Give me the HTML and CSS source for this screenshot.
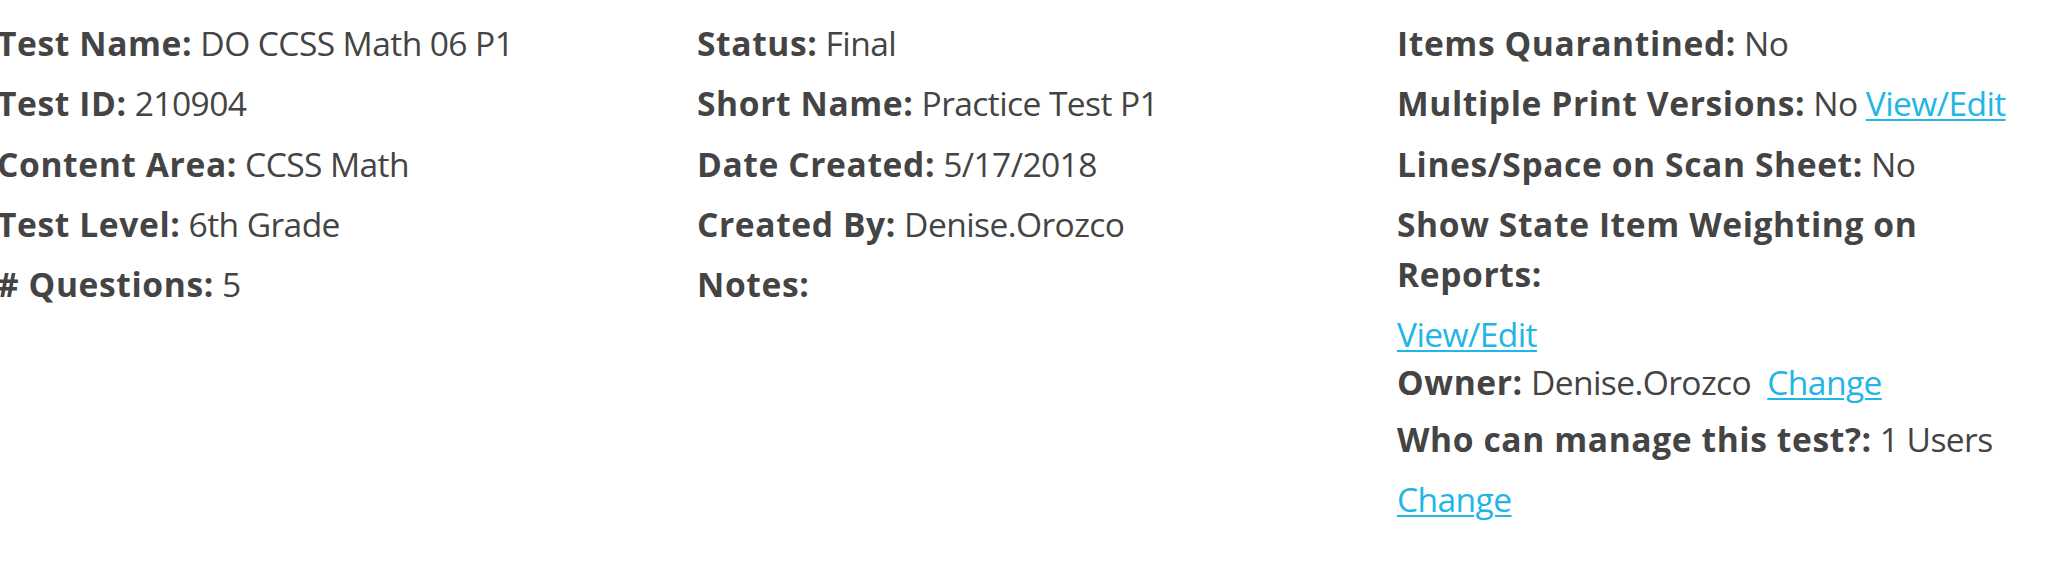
FILE: index.html
```html
<!DOCTYPE html>
<html lang="en">
<head>
<meta charset="utf-8">
<title>Test Details</title>
<link rel="stylesheet" href="styles.css">
</head>
<body>
<div class="details">
  <div class="col">
    <p class="row"><b class="label">Test Name:</b> DO CCSS Math 06 P1</p>
    <p class="row"><b class="label">Test ID:</b> 210904</p>
    <p class="row"><b class="label">Content Area:</b> CCSS Math</p>
    <p class="row"><b class="label">Test Level:</b> 6th Grade</p>
    <p class="row"><b class="label"># Questions:</b> 5</p>
  </div>
  <div class="col">
    <p class="row"><b class="label">Status:</b> Final</p>
    <p class="row"><b class="label">Short Name:</b> Practice Test P1</p>
    <p class="row"><b class="label">Date Created:</b> 5/17/2018</p>
    <p class="row"><b class="label">Created By:</b> Denise.Orozco</p>
    <p class="row"><b class="label">Notes:</b></p>
  </div>
  <div class="col">
    <p class="row"><b class="label">Items Quarantined:</b> No</p>
    <p class="row"><b class="label">Multiple Print Versions:</b> No <a class="link" href="#">View/Edit</a></p>
    <p class="row"><b class="label">Lines/Space on Scan Sheet:</b> No</p>
    <p class="row"><b class="label">Show State Item Weighting on Reports:</b></p>
    <p class="row row-tight"><a class="link" href="#">View/Edit</a><br><b class="label">Owner:</b> Denise.Orozco <a class="link link-gap" href="#">Change</a></p>
    <p class="row"><b class="label">Who can manage this test?:</b> 1 Users</p>
    <p class="row"><a class="link" href="#">Change</a></p>
  </div>
</div>
</body>
</html>
```
FILE: styles.css
```css
html, body {
  margin: 0;
  padding: 0;
  background: #ffffff;
}

body {
  font-family: "Open Sans", "Noto Sans", sans-serif;
  font-size: 33.6px;
  line-height: 50.4px;
  color: #444444;
  letter-spacing: -0.6px;
}

.details {
  display: grid;
  grid-template-columns: 700px 700px 640px;
  padding-top: 18px;
  margin-left: -3px;
}

.row {
  margin: 0 0 9.9px;
}

.row-tight {
  line-height: 48px;
  margin-bottom: 8.5px;
}

.label {
  font-weight: 700;
  letter-spacing: 0.6px;
}

.link {
  color: #22b5e5;
  text-decoration: underline;
  text-underline-offset: 3px;
  text-decoration-thickness: 2px;
}

.link-gap {
  margin-left: 8px;
}
```
